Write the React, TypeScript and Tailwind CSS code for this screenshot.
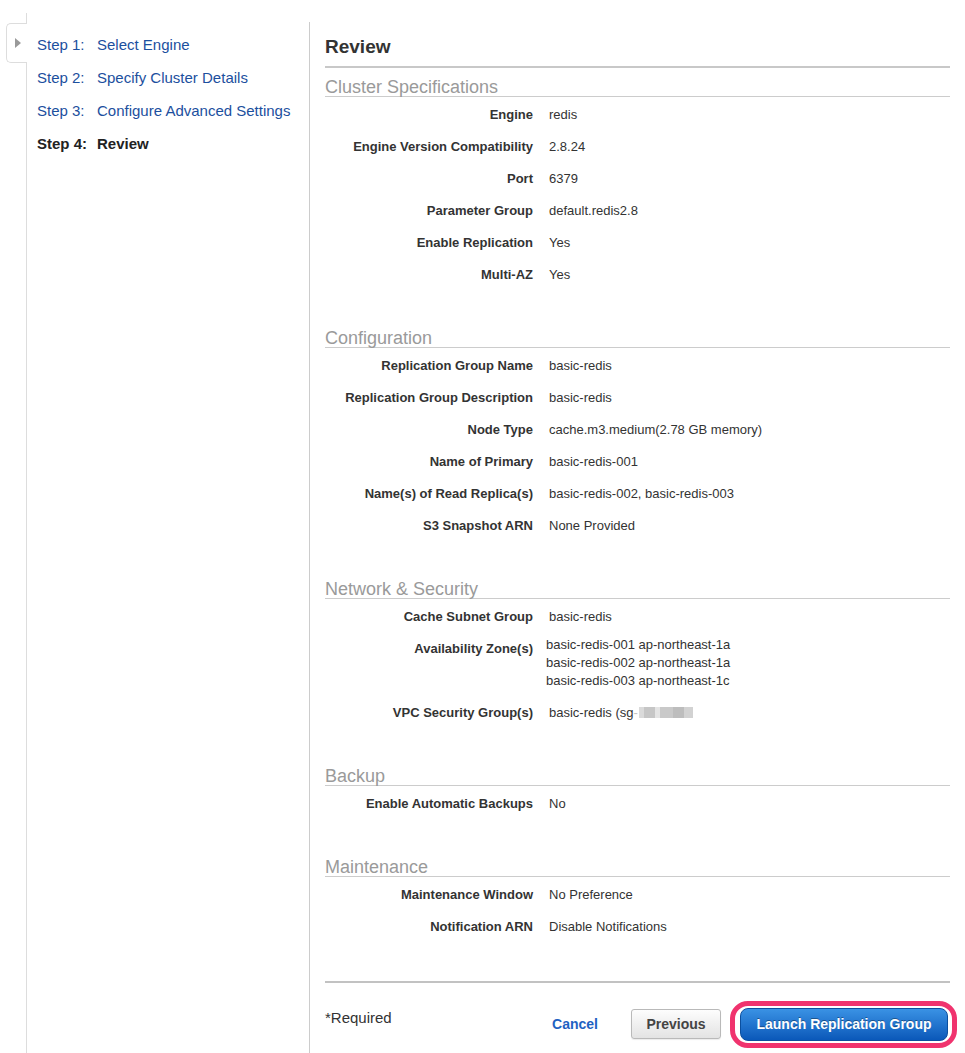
import React from "react";

type Row = { label: string; value: React.ReactNode; lines?: string[] };

const steps = [
  { n: "Step 1:", name: "Select Engine" },
  { n: "Step 2:", name: "Specify Cluster Details" },
  { n: "Step 3:", name: "Configure Advanced Settings" },
  { n: "Step 4:", name: "Review", active: true },
];

// blurred-out security group id
function Redacted() {
  const blocks = [
    "w-[5px] bg-[#dadada]",
    "w-[11px] bg-[#c6c6c6]",
    "w-[5px] bg-[#e4e4e4]",
    "w-[13px] bg-[#c9c9c9]",
    "w-[11px] bg-[#bdbdbd]",
    "w-[9px] bg-[#d2d2d2]",
  ];
  return (
    <span className="ml-[1px] inline-flex h-[11px] items-stretch align-[-1px] blur-[0.6px]">
      {blocks.map((b, i) => (
        <span key={i} className={b} />
      ))}
    </span>
  );
}

const sections: { title: string; rows: Row[] }[] = [
  {
    title: "Cluster Specifications",
    rows: [
      { label: "Engine", value: "redis" },
      { label: "Engine Version Compatibility", value: "2.8.24" },
      { label: "Port", value: "6379" },
      { label: "Parameter Group", value: "default.redis2.8" },
      { label: "Enable Replication", value: "Yes" },
      { label: "Multi-AZ", value: "Yes" },
    ],
  },
  {
    title: "Configuration",
    rows: [
      { label: "Replication Group Name", value: "basic-redis" },
      { label: "Replication Group Description", value: "basic-redis" },
      { label: "Node Type", value: "cache.m3.medium(2.78 GB memory)" },
      { label: "Name of Primary", value: "basic-redis-001" },
      { label: "Name(s) of Read Replica(s)", value: "basic-redis-002, basic-redis-003" },
      { label: "S3 Snapshot ARN", value: "None Provided" },
    ],
  },
  {
    title: "Network & Security",
    rows: [
      { label: "Cache Subnet Group", value: "basic-redis" },
      {
        label: "Availability Zone(s)",
        value: null,
        lines: [
          "basic-redis-001 ap-northeast-1a",
          "basic-redis-002 ap-northeast-1a",
          "basic-redis-003 ap-northeast-1c",
        ],
      },
      {
        label: "VPC Security Group(s)",
        value: (
          <>
            basic-redis (sg<span className="text-[#c4c4c4]">-</span>
            <Redacted />
          </>
        ),
      },
    ],
  },
  {
    title: "Backup",
    rows: [{ label: "Enable Automatic Backups", value: "No" }],
  },
  {
    title: "Maintenance",
    rows: [
      { label: "Maintenance Window", value: "No Preference" },
      { label: "Notification ARN", value: "Disable Notifications" },
    ],
  },
];

function ReviewRow({ row }: { row: Row }) {
  if (row.lines) {
    return (
      <div className="flex h-16 items-start">
        <div className="flex h-8 w-[208px] shrink-0 items-center justify-end pt-[4px] text-[13px] font-bold text-[#333]">
          {row.label}
        </div>
        <div className="pl-[13px] pt-[5px] text-[13px] leading-[18px] text-[#333]">
          {row.lines.map((l) => (
            <div key={l}>{l}</div>
          ))}
        </div>
      </div>
    );
  }
  return (
    <div className="flex h-8 items-center pt-[4px]">
      <div className="w-[208px] shrink-0 text-right text-[13px] font-bold text-[#333]">{row.label}</div>
      <div className="pl-[16px] text-[13px] text-[#333]">{row.value}</div>
    </div>
  );
}

export default function App() {
  return (
    <div className="flex min-h-screen bg-white font-['Liberation_Sans',Arial,sans-serif]">
      {/* wizard steps */}
      <aside className="flex w-[309px] shrink-0 flex-col pt-[13px]">
        <div className="relative ml-[26px] flex-1 border-l border-[#dddddd]">
          <div className="absolute left-[-21px] top-[10px] flex h-[40px] w-[21px] items-center rounded-l-[5px] border border-r-0 border-[#dddddd] bg-white pl-[8px]">
            <span className="h-0 w-0 border-y-[5px] border-l-[6px] border-y-transparent border-l-[#9a9a9a]" />
          </div>
          <ul className="pl-[10px] pt-[16px]">
            {steps.map((s) => (
              <li
                key={s.n}
                className={
                  s.active
                    ? "flex h-[33px] items-center text-[15px] font-bold text-[#222]"
                    : "flex h-[33px] items-center text-[15px] text-[#1c4f9e]"
                }
              >
                <span className="w-[60px]">{s.n}</span>
                <span>{s.name}</span>
              </li>
            ))}
          </ul>
        </div>
      </aside>

      {/* review panel */}
      <main className="mt-[22px] flex-1 border-l border-[#cccccc] pl-[15px] pr-[15px]">
        <h1 className="border-b-2 border-[#c8c8c8] pb-[8px] pt-[14px] text-[19px] font-bold leading-[22px] text-[#333]">
          Review
        </h1>

        {sections.map((sec, i) => (
          <section key={sec.title} className={i === 0 ? "mt-[10px]" : "mt-[40px]"}>
            <h2 className="h-[19px] border-b border-[#cccccc] text-[18px] leading-[18px] text-[#9a9a9a]">
              {sec.title}
            </h2>
            {sec.rows.map((r) => (
              <ReviewRow key={r.label} row={r} />
            ))}
          </section>
        ))}

        <div className="mt-[40px] h-[2px] bg-[#c2c2c2]" />

        <div className="mt-[24px] flex items-start justify-between">
          <span className="pt-[2px] text-[15px] leading-[18px] text-[#333]">*Required</span>
          <div className="mr-[2px] flex h-[33px] items-center pt-[1px]">
            <a className="text-[14px] font-bold text-[#1f62c2]">Cancel</a>
            <button className="ml-[33px] h-[30px] w-[90px] rounded-[3px] border border-[#b9b9b9] bg-linear-to-b from-[#fdfdfd] to-[#e3e3e3] text-[14px] font-bold text-[#444] shadow-[0_1px_1px_rgba(0,0,0,0.08)]">
              Previous
            </button>
            <button className="relative ml-[19px] h-[33px] w-[208px] rounded-[8px] border border-[#0b4f9f] bg-linear-to-b from-[#3a92e4] to-[#0a58b9] text-[14px] font-bold text-white [text-shadow:0_-1px_0_rgba(0,0,0,0.35)]">
              Launch Replication Group
              <span className="pointer-events-none absolute -bottom-[8px] -left-[11px] -right-[10px] -top-[8px] rounded-[18px] border-[5px] border-[#f0336e]" />
            </button>
          </div>
        </div>
      </main>
    </div>
  );
}
